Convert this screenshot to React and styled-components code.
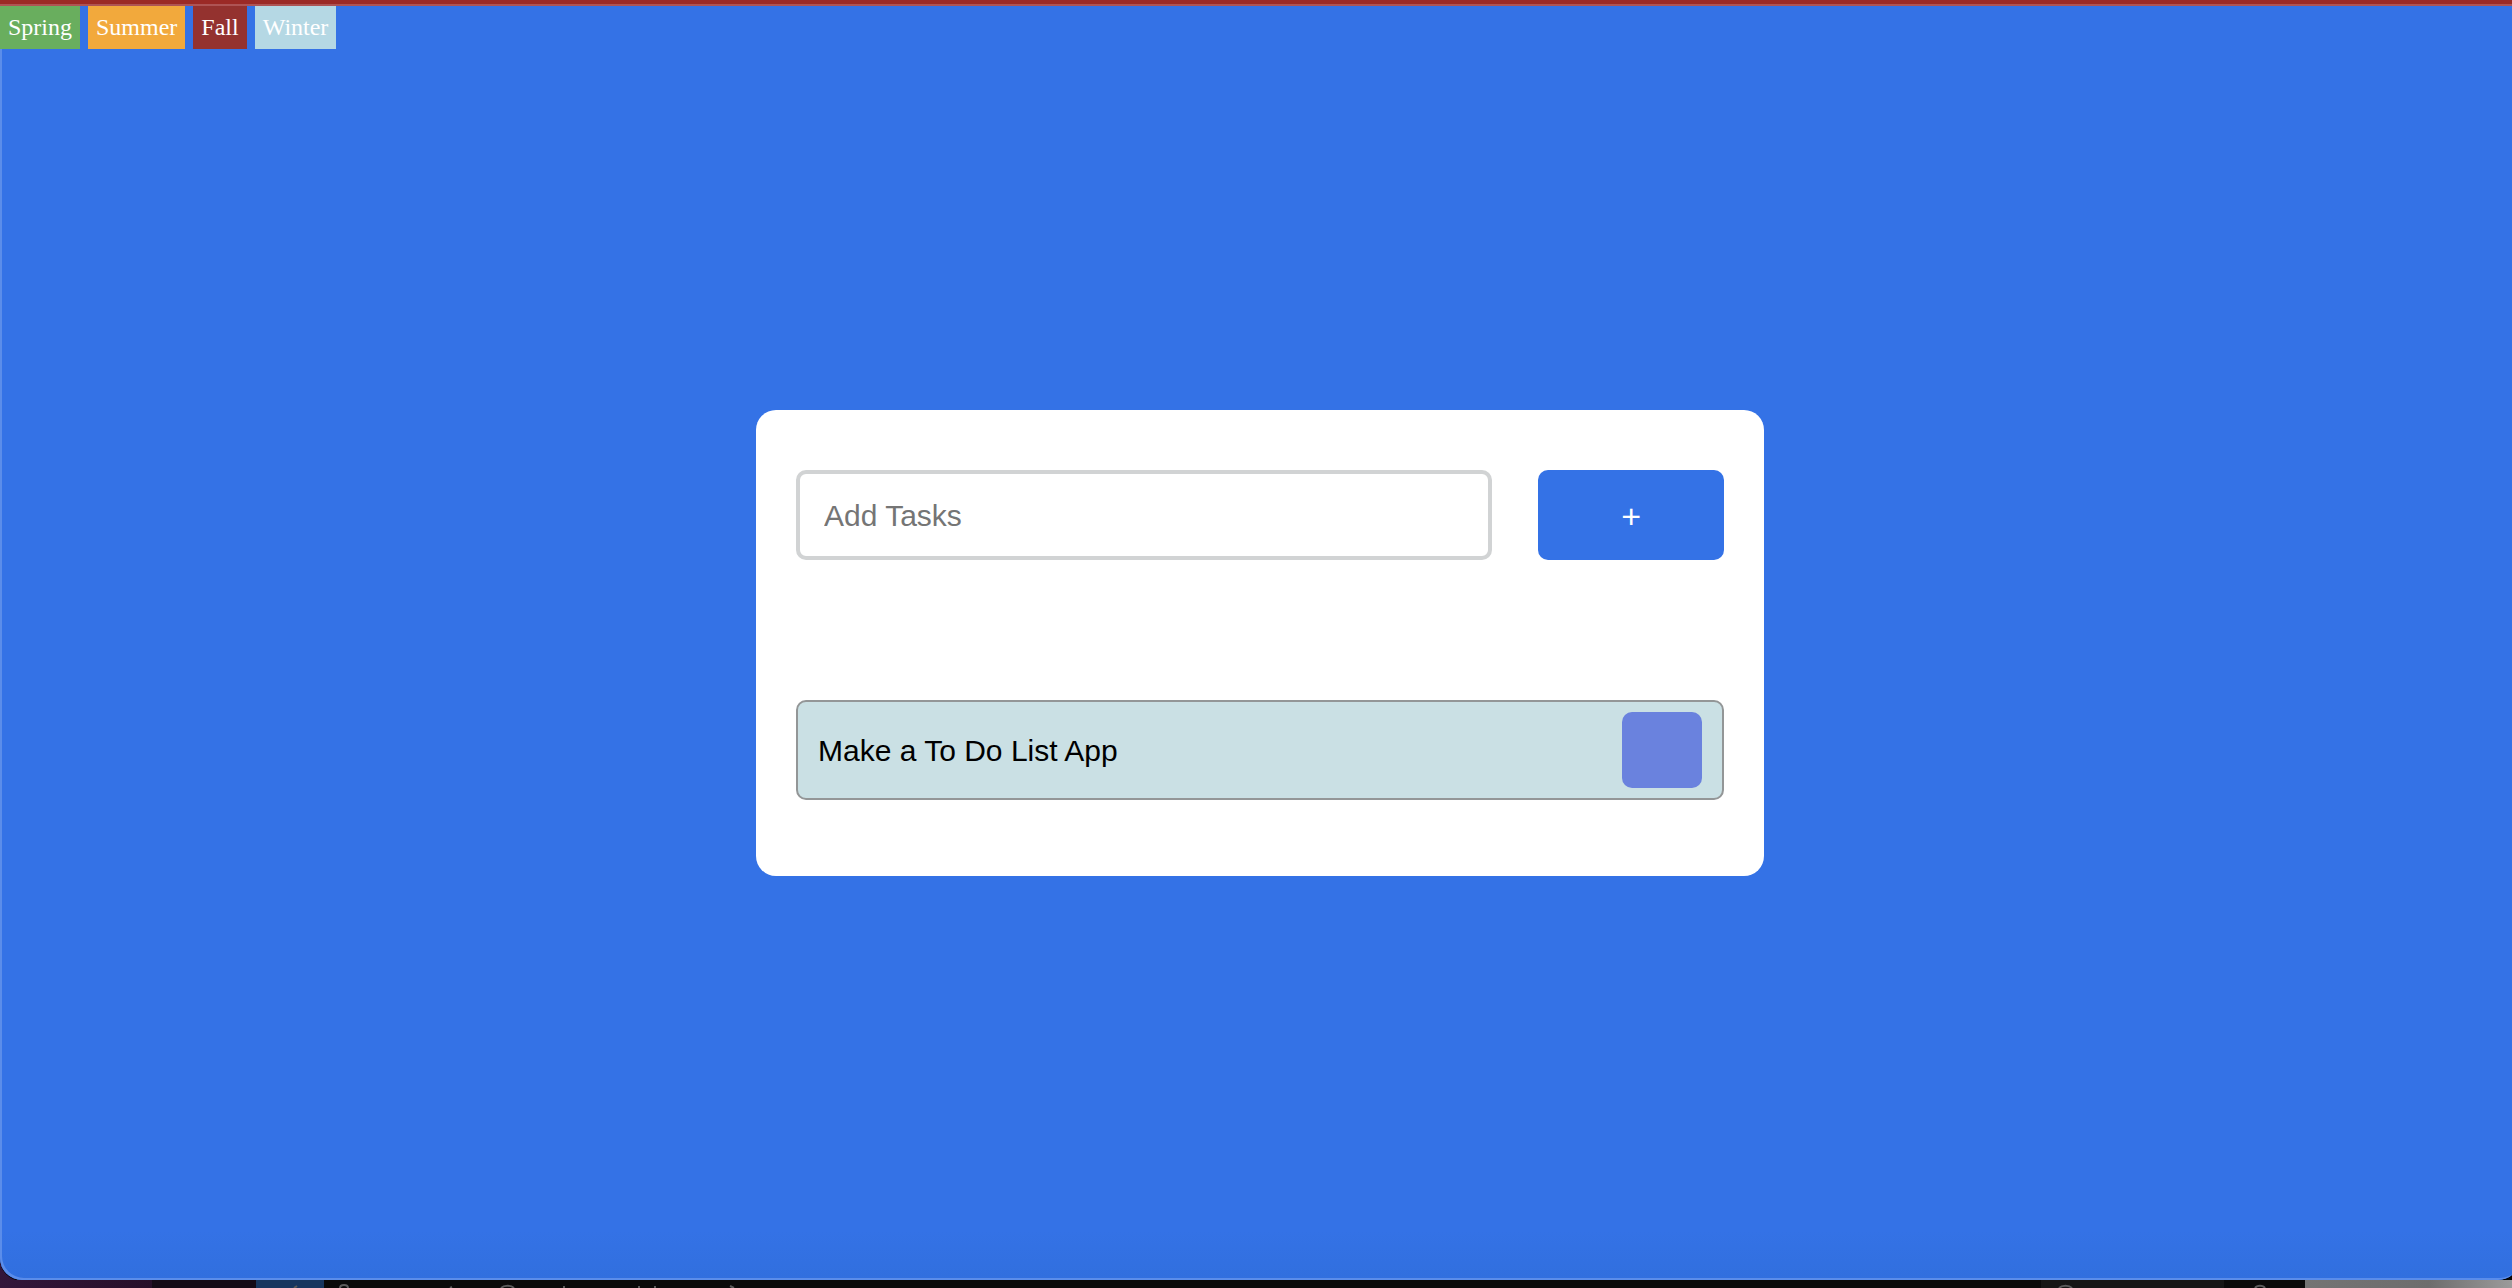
import React, { useState } from "react";
import styled, { createGlobalStyle } from "styled-components";

const GlobalStyle = createGlobalStyle`
  * { box-sizing: border-box; }
  body { margin: 0; background: #0a0a0a; overflow: hidden; }
`;

const Desktop = styled.div`
  display: flex;
  flex-direction: column;
  height: 100vh;
  overflow: hidden;
`;

const TopEdge = styled.div`
  flex: none;
  height: 6px;
  background: #9b2a26;
  border-bottom: 2px solid #ae5454;
`;

const Backdrop = styled.div`
  flex: 1;
  display: flex;
  flex-direction: column;
  min-height: 0;
  background: linear-gradient(90deg, #33163a, #180b1c 200px, #0a0a0a 300px);
`;

const Window = styled.main`
  flex: 1;
  display: grid;
  grid-template-rows: 1fr auto 1fr;
  margin-right: -8px;
  border-radius: 0 0 22px 22px;
  background: linear-gradient(#3472e6 calc(100% - 50px), #316fde);
  box-shadow: inset 2px -2px 0 #5b8dea, 0 1px 0 #000;
`;

const Seasons = styled.nav`
  display: flex;
  align-items: flex-start;
  gap: 8px;
`;

const SeasonButton = styled.button`
  height: 43px;
  padding: 0 8px 2px;
  border: 0;
  background: ${(p) => p.$color};
  color: #fff;
  font: 24px/28px "Liberation Serif", serif;
`;

const Card = styled.section`
  justify-self: center;
  width: 40%;
  padding: 60px 40px 76px;
  border-radius: 20px;
  background: #fff;
  font-family: "Liberation Sans", sans-serif;
`;

const TaskForm = styled.form`
  display: grid;
  grid-template-columns: 75% 20%;
  justify-content: space-between;
`;

const TaskInput = styled.input`
  width: 100%;
  height: 90px;
  padding: 2px 24px 0;
  border: 4px solid #d1d3d4;
  border-radius: 10px;
  background: #fff;
  color: #000;
  font: 30px "Liberation Sans", sans-serif;
  &::placeholder { color: #757575; opacity: 1; }
`;

const AddButton = styled.button`
  height: 90px;
  padding: 2px 0 0;
  border: 0;
  border-radius: 10px;
  background: #3472e6;
  color: #fff;
  font: 34px "Liberation Sans", sans-serif;
`;

const TaskList = styled.ul`
  display: grid;
  gap: 20px;
  margin: 140px 0 0;
  padding: 0;
  list-style: none;
`;

const Task = styled.li`
  display: flex;
  align-items: center;
  justify-content: space-between;
  height: 100px;
  padding: 0 20px;
  border: 2px solid #939697;
  border-radius: 10px;
  background: #cae0e4;
  color: #000;
  font-size: 30px;
`;

const TaskName = styled.span`
  padding-top: 2px;
`;

const DeleteButton = styled.button`
  width: 80px;
  height: 76px;
  border: 0;
  border-radius: 10px;
  background: #6a82de;
`;

const BottomStrip = styled.div`
  flex: none;
  display: flex;
  height: 8px;
  overflow: hidden;
`;

const StripPart = styled.div`
  flex: ${(p) => (p.$width ? `0 0 ${p.$width}px` : "1")};
  background: ${(p) => p.$fill};
`;

const Fragments = styled.svg`
  display: block;
  width: 100%;
  height: 8px;
  fill: none;
  stroke: #5c5c5c;
  stroke-width: 2;
`;

const seasons = [
  ["Spring", "#69ae5e"],
  ["Summer", "#f2a93c"],
  ["Fall", "#94322f"],
  ["Winter", "#b5d8e4"],
];

export default function App() {
  const [tasks, setTasks] = useState(["Make a To Do List App"]);
  const [draft, setDraft] = useState("");
  const [theme, setTheme] = useState(null);

  const addTask = (event) => {
    event.preventDefault();
    if (!draft.trim()) return;
    setTasks([...tasks, draft.trim()]);
    setDraft("");
  };

  return (
    <Desktop>
      <GlobalStyle />
      <TopEdge />
      <Backdrop>
        <Window style={theme ? { background: theme } : undefined}>
          <Seasons>
            {seasons.map(([name, color]) => (
              <SeasonButton key={name} $color={color} onClick={() => setTheme(color)}>
                {name}
              </SeasonButton>
            ))}
          </Seasons>
          <Card>
            <TaskForm onSubmit={addTask}>
              <TaskInput
                aria-label="Add Tasks"
                placeholder="Add Tasks"
                value={draft}
                onChange={(event) => setDraft(event.target.value)}
              />
              <AddButton>+</AddButton>
            </TaskForm>
            <TaskList>
              {tasks.map((task, index) => (
                <Task key={index}>
                  <TaskName>{task}</TaskName>
                  <DeleteButton
                    aria-label="Delete task"
                    onClick={() => setTasks(tasks.filter((_, i) => i !== index))}
                  />
                </Task>
              ))}
            </TaskList>
          </Card>
        </Window>
        <BottomStrip>
          <StripPart $width={152} $fill="linear-gradient(90deg, #33163a, #260f29)" />
          <StripPart $width={104} $fill="#140a16" />
          <StripPart $width={68} $fill="#17365f">
            <Fragments><path d="M38 8l3-2" /></Fragments>
          </StripPart>
          <StripPart $fill="#0a0a0a">
            <Fragments>
              <path d="M16 8c0-4 8-4 8 0M126 8l2-1M177 8c3-3 10-3 13 0M240 6v2M315 6v2M331 6v2M406 6l4 2" />
            </Fragments>
          </StripPart>
          <StripPart $width={183} $fill="#161616">
            <Fragments><path d="M18 8c3-3 10-3 13 0" /></Fragments>
          </StripPart>
          <StripPart $width={81} $fill="#0a0a0a">
            <Fragments><path d="M31 8c2-3 8-3 10 0" /></Fragments>
          </StripPart>
          <StripPart $width={207} $fill="linear-gradient(90deg, #747474, #6d6d6d 60%, #9b9b9b)" />
        </BottomStrip>
      </Backdrop>
    </Desktop>
  );
}
